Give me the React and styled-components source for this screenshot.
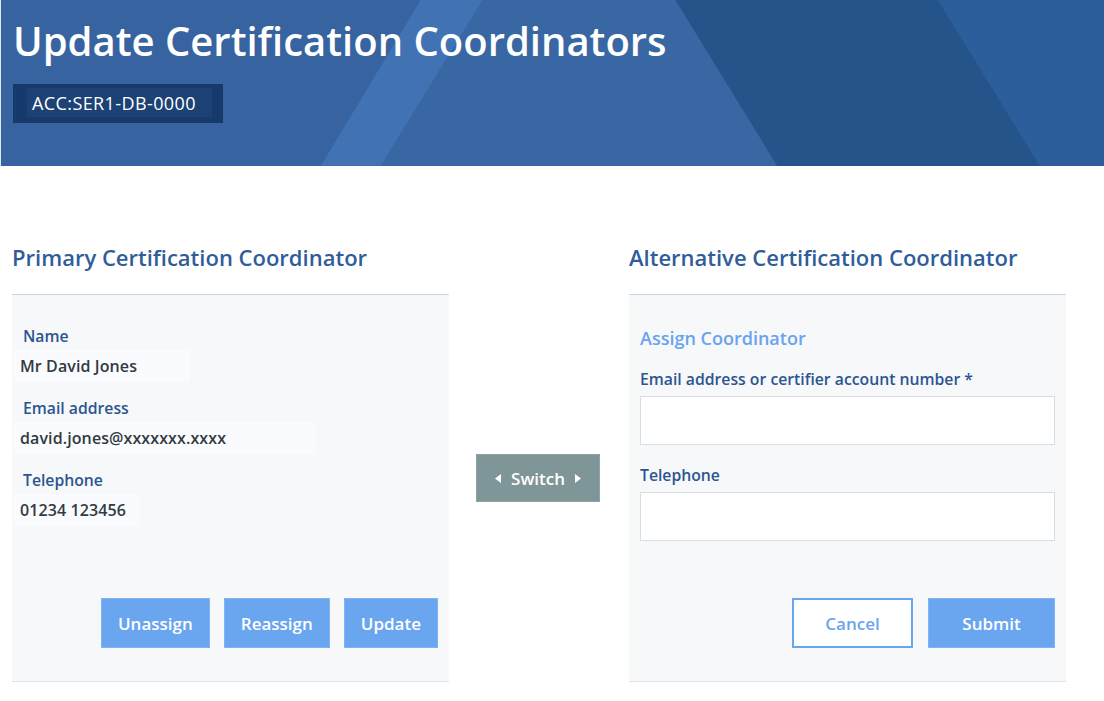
import React from 'react'
import styled, { createGlobalStyle } from 'styled-components'

const GlobalStyle = createGlobalStyle`
  html, body {
    margin: 0;
    padding: 0;
    background: #ffffff;
    font-family: "Open Sans", "Liberation Sans", sans-serif;
  }
  * { box-sizing: border-box; }
`

// header backdrop: the slanted stripes drawn as an svg background
const stripes = encodeURIComponent(
  `<svg xmlns="http://www.w3.org/2000/svg" viewBox="0 0 1104 166" preserveAspectRatio="none">` +
  `<rect width="1104" height="166" fill="#3764a0"/>` +
  `<polygon points="482,0 675,0 777,166 380,166" fill="#3967a3"/>` +
  `<polygon points="420,0 482,0 380,166 320,166" fill="#4172b3"/>` +
  `<polygon points="675,0 938,0 1040,166 777,166" fill="#25548a"/>` +
  `<polygon points="938,0 1104,0 1104,166 1040,166" fill="#2d5e9c"/>` +
  `</svg>`
)

const Header = styled.header`
  height: 166px;
  padding: 16px 12px 0;
  background: url("data:image/svg+xml,${stripes}") no-repeat;
  background-size: 100% 100%;
  border-left: 1px solid #dfe6ef;
`

const Title = styled.h1`
  margin: 0;
  color: #ffffff;
  font-size: 40px;
  font-weight: 600;
  line-height: 50px;
`

const AccBox = styled.div`
  display: inline-flex;
  margin-top: 18px;
  width: 210px;
  height: 39px;
  padding: 4px 11px 6px 14px;
  background: #163a6b;
`

const AccText = styled.span`
  flex: 1;
  display: flex;
  align-items: center;
  padding-left: 5px;
  background: #1c4174;
  color: #ffffff;
  font-size: 18px;
  letter-spacing: 0.4px;
  white-space: nowrap;
`

const Main = styled.main`
  display: grid;
  grid-template-columns: 437px 180px 437px;
  padding: 76px 0 0 12px;
`

const Column = styled.section`
  display: flex;
  flex-direction: column;
`

const ColumnTitle = styled.h2`
  margin: 0 0 22px;
  color: #2f5d9a;
  font-size: 22px;
  font-weight: 600;
  line-height: 30px;
  white-space: nowrap;
`

const Panel = styled.div`
  display: flex;
  flex-direction: column;
  height: 388px;
  padding: ${p => p.$form ? '31px 11px 33px' : '31px 11px 33px 1px'};
  background: #f6f8fa;
  border-top: 1px solid #c9d7e4;
  border-bottom: 1px solid #dde3ea;
`

const Field = styled.div`
  display: flex;
  flex-direction: column;
  align-items: flex-start;
  gap: 4px;
  height: 72px;
`

const Label = styled.span`
  padding-left: ${p => p.$inset || 0}px;
  color: #2c5590;
  font-size: 15.75px;
  font-weight: 600;
  line-height: 20px;
`

const Value = styled.span`
  width: ${p => p.$w}px;
  padding: 6px 7px;
  background: #f9fbfe;
  color: #333a40;
  font-size: 16px;
  font-weight: 600;
  line-height: 20px;
  white-space: nowrap;
  letter-spacing: 0.1px;
`

const FormTitle = styled.h3`
  margin: 0;
  color: #6aa3ee;
  font-size: 18px;
  font-weight: 600;
  line-height: 24px;
`

const FormField = styled.label`
  display: flex;
  flex-direction: column;
  gap: 7px;
  margin-top: ${p => p.$top}px;
`

const Input = styled.input`
  height: 49px;
  width: 100%;
  border: 1px solid #d5dde6;
  background: #ffffff;
  font: inherit;
  outline: none;
`

const Actions = styled.div`
  display: flex;
  justify-content: flex-end;
  gap: ${p => p.$gap || 15}px;
  margin-top: auto;
`

const Button = styled.button`
  height: 50px;
  min-width: ${p => p.$w}px;
  padding: 0 16px;
  border: ${p => p.$outline ? '2px solid #6aa5f0' : '1px solid #80b3f3'};
  background: ${p => p.$outline ? '#ffffff' : '#6aa5f0'};
  color: ${p => p.$outline ? '#6aa5f0' : '#ffffff'};
  font-family: inherit;
  font-size: 17px;
  font-weight: 600;
  cursor: pointer;
`

const Middle = styled.div`
  display: flex;
  justify-content: center;
  padding-top: 212px;
  padding-right: 2px;
`

const SwitchButton = styled.button`
  display: flex;
  align-items: center;
  justify-content: center;
  gap: 10px;
  width: 124px;
  height: 48px;
  border: 1px solid #8fa3a6;
  background: #7f9699;
  color: #ffffff;
  font-family: inherit;
  font-size: 17px;
  font-weight: 600;
  cursor: pointer;
`

const Caret = ({ dir }) => (
  <svg width="6" height="9" viewBox="0 0 6 9">
    <polygon points={dir === 'left' ? '6,0 6,9 0,4.5' : '0,0 0,9 6,4.5'} fill="#ffffff" />
  </svg>
)

export default function App() {
  return (
    <>
      <GlobalStyle />
      <Header>
        <Title>Update Certification Coordinators</Title>
        <AccBox>
          <AccText>ACC:SER1-DB-0000</AccText>
        </AccBox>
      </Header>

      <Main>
        <Column>
          <ColumnTitle>Primary Certification Coordinator</ColumnTitle>
          <Panel>
            <Field>
              <Label $inset={10}>Name</Label>
              <Value $w={177}>Mr David Jones</Value>
            </Field>
            <Field>
              <Label $inset={10}>Email address</Label>
              <Value $w={303}>david.jones@xxxxxxx.xxxx</Value>
            </Field>
            <Field>
              <Label $inset={10}>Telephone</Label>
              <Value $w={127}>01234 123456</Value>
            </Field>
            <Actions $gap={14}>
              <Button $w={108}>Unassign</Button>
              <Button $w={106}>Reassign</Button>
              <Button $w={94}>Update</Button>
            </Actions>
          </Panel>
        </Column>

        <Middle>
          <SwitchButton>
            <Caret dir="left" />
            Switch
            <Caret dir="right" />
          </SwitchButton>
        </Middle>

        <Column>
          <ColumnTitle>Alternative Certification Coordinator</ColumnTitle>
          <Panel $form>
            <FormTitle>Assign Coordinator</FormTitle>
            <FormField $top={19}>
              <Label>Email address or certifier account number *</Label>
              <Input type="text" />
            </FormField>
            <FormField $top={20}>
              <Label>Telephone</Label>
              <Input type="text" />
            </FormField>
            <Actions>
              <Button $w={121} $outline>Cancel</Button>
              <Button $w={127}>Submit</Button>
            </Actions>
          </Panel>
        </Column>
      </Main>
    </>
  )
}
